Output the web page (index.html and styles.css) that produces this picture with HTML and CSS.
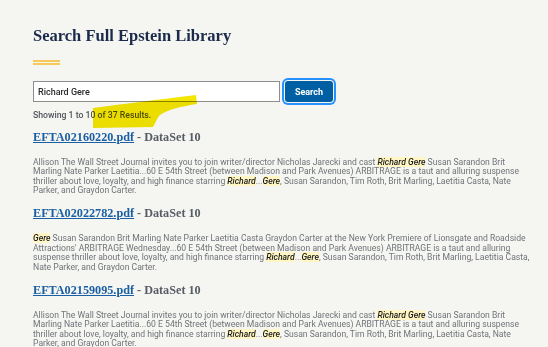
FILE: index.html
```html
<!DOCTYPE html>
<html>
<head>
<meta charset="utf-8">
<link rel="stylesheet" href="styles.css">
</head>
<body>
<div class="page">
  <h1 class="title">Search Full Epstein Library</h1>
  <div class="accent"><span></span><span></span></div>
  <form class="search">
    <input class="search-input" type="text" value="Richard Gere">
    <button class="search-btn" type="button">Search</button>
  </form>
  <p class="status">Showing 1 to 10 of 37 Results.</p>
  <svg class="marker" width="106" height="36" viewBox="0 0 106 36">
    <path d="M0 14 C 30 10, 70 5, 103 1 L 104 10 C 90 12, 72 16, 66 22 C 63 26, 62 30, 60 33 L 0 34 Z" fill="#f5e600"/>
  </svg>

  <div class="result">
    <h2 class="result-title"><a href="#">EFTA02160220.pdf</a> - DataSet 10</h2>
    <p class="snippet">Allison The Wall Street Journal invites you to join writer/director Nicholas Jarecki and cast <mark>Richard Gere</mark> Susan Sarandon Brit Marling Nate Parker Laetitia...60 E 54th Street (between Madison and Park Avenues) ARBITRAGE is a taut and alluring suspense thriller about love, loyalty, and high finance starring <mark>Richard</mark>...<mark>Gere</mark>, Susan Sarandon, Tim Roth, Brit Marling, Laetitia Casta, Nate Parker, and Graydon Carter.</p>
  </div>

  <div class="result">
    <h2 class="result-title"><a href="#">EFTA02022782.pdf</a> - DataSet 10</h2>
    <p class="snippet"><mark>Gere</mark> Susan Sarandon Brit Marling Nate Parker Laetitia Casta Graydon Carter at the New York Premiere of Lionsgate and Roadside Attractions' ARBITRAGE Wednesday...60 E 54th Street (between Madison and Park Avenues) ARBITRAGE is a taut and alluring suspense thriller about love, loyalty, and high finance starring <mark>Richard</mark>...<mark>Gere</mark>, Susan Sarandon, Tim Roth, Brit Marling, Laetitia Casta, Nate Parker, and Graydon Carter.</p>
  </div>

  <div class="result">
    <h2 class="result-title"><a href="#">EFTA02159095.pdf</a> - DataSet 10</h2>
    <p class="snippet">Allison The Wall Street Journal invites you to join writer/director Nicholas Jarecki and cast <mark>Richard Gere</mark> Susan Sarandon Brit Marling Nate Parker Laetitia...60 E 54th Street (between Madison and Park Avenues) ARBITRAGE is a taut and alluring suspense thriller about love, loyalty, and high finance starring <mark>Richard</mark>...<mark>Gere</mark>, Susan Sarandon, Tim Roth, Brit Marling, Laetitia Casta, Nate Parker, and Graydon Carter.</p>
  </div>
</div>
</body>
</html>
```

FILE: styles.css
```css
html, body {
  margin: 0;
  padding: 0;
  background: #f5f5f1;
  overflow: hidden;
}
.page {
  position: relative;
  padding: 25px 17px 0 33px;
  width: 498px;
  font-family: Roboto, "Liberation Sans", sans-serif;
}
.title {
  margin: 0;
  font-family: "Liberation Serif", serif;
  font-weight: bold;
  font-size: 16.5px;
  line-height: 22px;
  color: #1b2a4a;
}
.accent {
  margin-top: 13px;
  display: flex;
  flex-direction: column;
  gap: 1px;
}
.accent span {
  display: block;
  width: 27px;
  height: 2px;
  background: #f6c95a;
}
.search {
  margin: 16px 0 0;
  display: flex;
  align-items: center;
  gap: 5px;
}
.search-input {
  box-sizing: border-box;
  width: 247px;
  height: 21px;
  margin: 0;
  border: 1px solid #8d8d8d;
  background: #fff;
  padding: 0 4px;
  font-family: Roboto, "Liberation Sans", sans-serif;
  font-size: 9px;
  font-weight: 500;
  color: #2b2b2b;
  outline: none;
}
.search-btn {
  box-sizing: border-box;
  width: 48px;
  height: 21px;
  margin: 0;
  border: none;
  border-radius: 3px;
  background: #005ea2;
  color: #fff;
  font-family: Roboto, "Liberation Sans", sans-serif;
  font-weight: bold;
  font-size: 9px;
  box-shadow: 0 0 0 1px #f5f5f1, 0 0 0 3px #2491ff;
}
.status {
  position: relative;
  margin: 7px 0 0;
  font-size: 8.7px;
  line-height: 12px;
  font-weight: 500;
  color: #4f555c;
}
.marker {
  position: absolute;
  left: 93px;
  top: 94px;
  mix-blend-mode: multiply;
}
.result-title {
  margin: 8px 0 0;
  font-family: "Liberation Serif", serif;
  font-weight: bold;
  font-size: 12.2px;
  line-height: 16px;
  color: #565c65;
}
.result-title a {
  color: #1a5fa3;
  text-decoration: underline;
}
.result + .result .result-title {
  margin-top: 9.75px;
}
.snippet {
  margin: 13px 0 0;
  font-size: 8.6px;
  line-height: 9.4px;
  color: #6f7479;
}
mark {
  background: #fff6c4;
  color: #1b1b1b;
  font-style: italic;
  font-weight: 500;
}
```
